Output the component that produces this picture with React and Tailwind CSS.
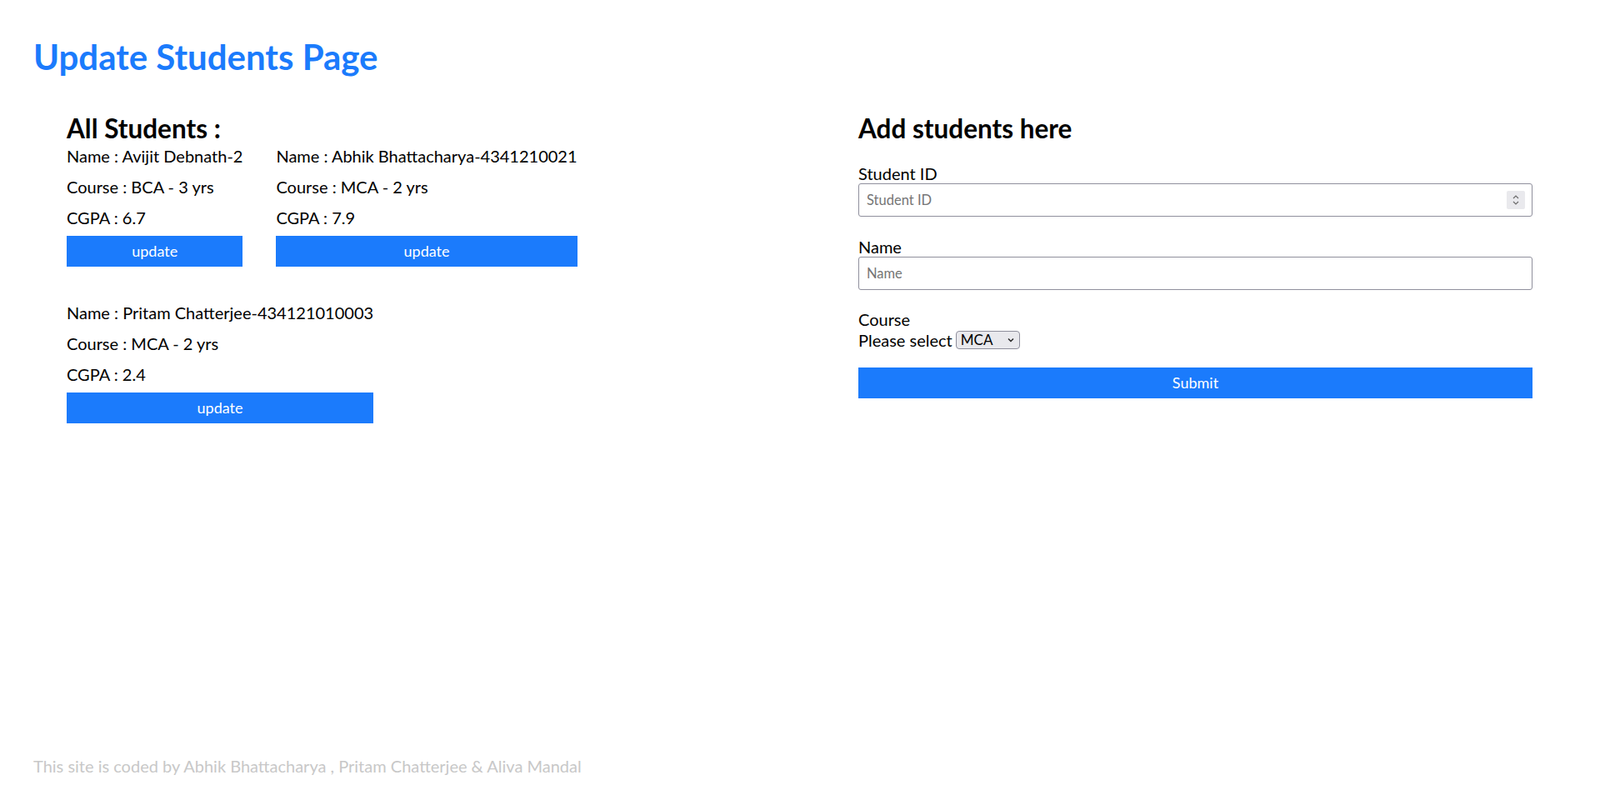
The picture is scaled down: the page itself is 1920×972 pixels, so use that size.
import React from "react";

const students = [
  { id: 1, name: "Avijit Debnath-2", course: "BCA - 3 yrs", cgpa: "6.7" },
  { id: 2, name: "Abhik Bhattacharya-4341210021", course: "MCA - 2 yrs", cgpa: "7.9" },
  { id: 3, name: "Pritam Chatterjee-434121010003", course: "MCA - 2 yrs", cgpa: "2.4" },
];

function StudentCard({ s }) {
  return (
    <div className="flex flex-col">
      <p className="h-[37px] flex items-center whitespace-nowrap">Name : {s.name}</p>
      <p className="h-[37px] flex items-center whitespace-nowrap">Course : {s.course}</p>
      <p className="h-[37px] flex items-center whitespace-nowrap">CGPA : {s.cgpa}</p>
      <button className="mt-[4px] h-[37px] bg-[#1b7bfc] text-white text-[18px]">update</button>
    </div>
  );
}

export default function App() {
  return (
    <div className="min-h-screen bg-white text-black flex flex-col font-['Lato','Open_Sans',sans-serif] text-[20px]">
      <h1 className="pl-[40px] pt-[44px] text-[42px] leading-[48px] font-bold text-[#1b7bfc]">
        Update Students Page
      </h1>

      <div className="flex mt-[45px]">
        {/* Left: student list */}
        <div className="flex-1 pl-[80px]">
          <h3 className="text-[31.5px] leading-[34px] font-bold">All Students :</h3>
          <div className="flex flex-wrap gap-x-[40px] gap-y-[36px] max-w-[640px] -mt-[3px]">
            {students.map((s) => (
              <StudentCard key={s.id} s={s} />
            ))}
          </div>
        </div>

        {/* Right: add form */}
        <div className="w-[809px] mr-[81px]">
          <h3 className="text-[31.5px] leading-[34px] font-bold">Add students here</h3>

          <label className="block mt-[25px] leading-[24px]">Student ID</label>
          <div className="flex items-center h-[40px] border border-[#8f8f9d] rounded-[3px] pl-[9px] pr-[8px]">
            <input
              placeholder="Student ID"
              className="flex-1 outline-none text-[16.5px] placeholder:text-[#757575]"
            />
            <span className="w-[22px] h-[22px] bg-[#e9e9ed] rounded-[2px] flex items-center justify-center">
              <svg width="10" height="14" viewBox="0 0 10 14" fill="none" stroke="#6b6b6b" strokeWidth="1.2">
                <path d="M2 5l3-3 3 3" />
                <path d="M2 9l3 3 3-3" />
              </svg>
            </span>
          </div>

          <label className="block mt-[24px] leading-[24px]">Name</label>
          <input
            placeholder="Name"
            className="block w-full h-[40px] border border-[#8f8f9d] rounded-[3px] px-[9px] text-[16.5px] outline-none placeholder:text-[#757575]"
          />

          <p className="mt-[23px] leading-[24px]">Course</p>
          <div className="flex items-center h-[26px]">
            <span>Please select</span>
            <div className="ml-[4px] w-[77px] h-[22px] bg-[#e9e9ed] border border-[#8f8f9d] rounded-[4px] flex items-center justify-between px-[5px] text-[17px]">
              <span>MCA</span>
              <svg width="10" height="8" viewBox="0 0 10 8" fill="none" stroke="#222" strokeWidth="1.4">
                <path d="M2 2.5l3 3 3-3" />
              </svg>
            </div>
          </div>

          <button className="mt-[20px] w-full h-[37px] bg-[#1b7bfc] text-white text-[18px]">Submit</button>
        </div>
      </div>

      <footer className="mt-auto pl-[40px] pb-[38px] text-[#c8c8c8]">
        This site is coded by Abhik Bhattacharya , Pritam Chatterjee &amp; Aliva Mandal
      </footer>
    </div>
  );
}
